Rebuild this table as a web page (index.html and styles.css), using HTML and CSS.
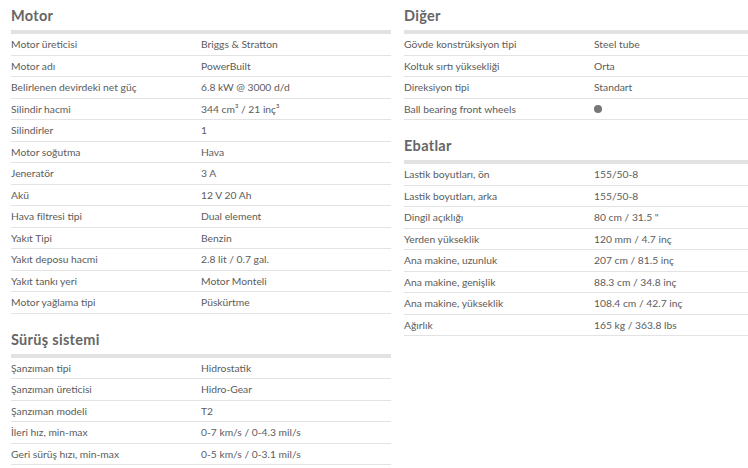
FILE: index.html
```html
<!DOCTYPE html>
<html lang="tr">
<head>
<meta charset="utf-8">
<link rel="stylesheet" href="styles.css">
</head>
<body>
<div class="page">
  <div class="col">
    <section class="sec">
      <h2 class="title">Motor</h2>
      <div class="table">
        <div class="row"><span class="k">Motor üreticisi</span><span class="v">Briggs &amp; Stratton</span></div>
        <div class="row"><span class="k">Motor adı</span><span class="v">PowerBuilt</span></div>
        <div class="row"><span class="k">Belirlenen devirdeki net güç</span><span class="v">6.8 kW @ 3000 d/d</span></div>
        <div class="row"><span class="k">Silindir hacmi</span><span class="v">344 cm³ / 21 inç³</span></div>
        <div class="row"><span class="k">Silindirler</span><span class="v">1</span></div>
        <div class="row"><span class="k">Motor soğutma</span><span class="v">Hava</span></div>
        <div class="row"><span class="k">Jeneratör</span><span class="v">3 A</span></div>
        <div class="row"><span class="k">Akü</span><span class="v">12 V 20 Ah</span></div>
        <div class="row"><span class="k">Hava filtresi tipi</span><span class="v">Dual element</span></div>
        <div class="row"><span class="k">Yakıt Tipi</span><span class="v">Benzin</span></div>
        <div class="row"><span class="k">Yakıt deposu hacmi</span><span class="v">2.8 lit / 0.7 gal.</span></div>
        <div class="row"><span class="k">Yakıt tankı yeri</span><span class="v">Motor Monteli</span></div>
        <div class="row"><span class="k">Motor yağlama tipi</span><span class="v">Püskürtme</span></div>
      </div>
    </section>
    <section class="sec">
      <h2 class="title">Sürüş sistemi</h2>
      <div class="table">
        <div class="row"><span class="k">Şanzıman tipi</span><span class="v">Hidrostatik</span></div>
        <div class="row"><span class="k">Şanzıman üreticisi</span><span class="v">Hidro-Gear</span></div>
        <div class="row"><span class="k">Şanzıman modeli</span><span class="v">T2</span></div>
        <div class="row"><span class="k">İleri hız, min-max</span><span class="v">0-7 km/s / 0-4.3 mil/s</span></div>
        <div class="row"><span class="k">Geri sürüş hızı, min-max</span><span class="v">0-5 km/s / 0-3.1 mil/s</span></div>
      </div>
    </section>
  </div>
  <div class="col">
    <section class="sec">
      <h2 class="title">Diğer</h2>
      <div class="table">
        <div class="row"><span class="k">Gövde konstrüksiyon tipi</span><span class="v">Steel tube</span></div>
        <div class="row"><span class="k">Koltuk sırtı yüksekliği</span><span class="v">Orta</span></div>
        <div class="row"><span class="k">Direksiyon tipi</span><span class="v">Standart</span></div>
        <div class="row"><span class="k">Ball bearing front wheels</span><span class="v"><span class="dot"></span></span></div>
      </div>
    </section>
    <section class="sec">
      <h2 class="title">Ebatlar</h2>
      <div class="table">
        <div class="row"><span class="k">Lastik boyutları, ön</span><span class="v">155/50-8</span></div>
        <div class="row"><span class="k">Lastik boyutları, arka</span><span class="v">155/50-8</span></div>
        <div class="row"><span class="k">Dingil açıklığı</span><span class="v">80 cm / 31.5 "</span></div>
        <div class="row"><span class="k">Yerden yükseklik</span><span class="v">120 mm / 4.7 inç</span></div>
        <div class="row"><span class="k">Ana makine, uzunluk</span><span class="v">207 cm / 81.5 inç</span></div>
        <div class="row"><span class="k">Ana makine, genişlik</span><span class="v">88.3 cm / 34.8 inç</span></div>
        <div class="row"><span class="k">Ana makine, yükseklik</span><span class="v">108.4 cm / 42.7 inç</span></div>
        <div class="row"><span class="k">Ağırlık</span><span class="v">165 kg / 363.8 lbs</span></div>
      </div>
    </section>
  </div>
</div>
</body>
</html>
```
FILE: styles.css
```css
html, body {
  margin: 0;
  padding: 0;
  background: #fff;
}
body {
  font-family: "Lato", "DejaVu Sans", sans-serif;
  color: #5c5c5c;
  overflow: hidden;
}
.page {
  width: 748px;
  overflow: hidden;
  display: grid;
  grid-template-columns: 380px 380px;
  column-gap: 13px;
  padding-left: 11px;
  box-sizing: border-box;
  align-items: start;
}
.sec + .sec {
  margin-top: 10px;
}
.title {
  margin: 0;
  padding-top: 6px;
  height: 30px;
  line-height: 20px;
  font-size: 14.5px;
  font-weight: 700;
  color: #666;
  letter-spacing: 0.3px;
  box-sizing: border-box;
}
.table {
  border-top: 4px solid #e2e2e2;
}
.row {
  display: flex;
  border-bottom: 1px solid #e3e3e3;
  padding: 4px 0;
  line-height: 12.5px;
  font-size: 10.3px;
}
.k {
  width: 50%;
}
.v {
  width: 50%;
  display: flex;
  align-items: center;
}
.dot {
  display: inline-block;
  width: 8px;
  height: 8px;
  border-radius: 50%;
  background: #777;
}
```
